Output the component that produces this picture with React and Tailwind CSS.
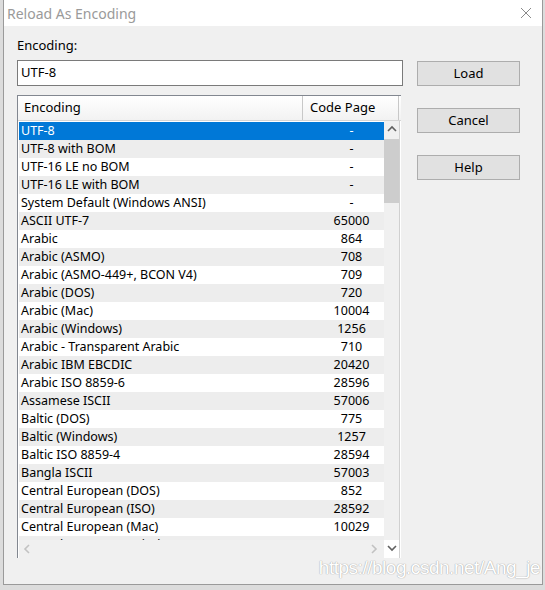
import React from 'react';

const rows = [
  ['UTF-8', '-'],
  ['UTF-8 with BOM', '-'],
  ['UTF-16 LE no BOM', '-'],
  ['UTF-16 LE with BOM', '-'],
  ['System Default (Windows ANSI)', '-'],
  ['ASCII UTF-7', '65000'],
  ['Arabic', '864'],
  ['Arabic (ASMO)', '708'],
  ['Arabic (ASMO-449+, BCON V4)', '709'],
  ['Arabic (DOS)', '720'],
  ['Arabic (Mac)', '10004'],
  ['Arabic (Windows)', '1256'],
  ['Arabic - Transparent Arabic', '710'],
  ['Arabic IBM EBCDIC', '20420'],
  ['Arabic ISO 8859-6', '28596'],
  ['Assamese ISCII', '57006'],
  ['Baltic (DOS)', '775'],
  ['Baltic (Windows)', '1257'],
  ['Baltic ISO 8859-4', '28594'],
  ['Bangla ISCII', '57003'],
  ['Central European (DOS)', '852'],
  ['Central European (ISO)', '28592'],
  ['Central European (Mac)', '10029'],
  ['Central European (Windows)', '1250'],
];

const Chevron = ({ dir, className }) => {
  const d = {
    up: 'M1 6 L5 2 L9 6',
    down: 'M1 2 L5 6 L9 2',
    left: 'M6 1 L2 5 L6 9',
    right: 'M2 1 L6 5 L2 9',
  }[dir];
  return (
    <svg width="10" height="10" viewBox="0 0 10 10" className={className}>
      <path d={d} fill="none" stroke="currentColor" strokeWidth="1.6" />
    </svg>
  );
};

const Button = ({ children }) => (
  <button className="w-[103px] h-[25px] bg-[#e1e1e1] border border-[#adadad] text-[13px] text-black">
    {children}
  </button>
);

export default function App() {
  return (
    <div
      className="w-[545px] h-[590px] bg-[#dcdcdc] overflow-hidden"
      style={{ fontFamily: '"Noto Sans", "Noto Sans CJK SC", sans-serif' }}
    >
      <div className="ml-[3px] w-[540px] h-[585px] bg-[#f0f0f0] border border-[#9a9a9a] border-t-0 relative flex flex-col">
        {/* title bar */}
        <div className="h-[26px] bg-white flex items-center justify-between pl-[3px] pr-[10px] shrink-0">
          <span className="text-[14px] text-[#9a9a9a]">Reload As Encoding</span>
          <svg width="12" height="12" viewBox="0 0 12 12">
            <path d="M1 1 L11 11 M11 1 L1 11" stroke="#8a8a8a" strokeWidth="1" />
          </svg>
        </div>

        <div className="flex pl-[13px] pt-[10px]">
          <div className="flex flex-col">
            <span className="text-[13px] text-black leading-[18px]">Encoding:</span>
            <div className="mt-[6px] w-[386px] h-[26px] bg-white border border-[#7a7a7a] flex items-center pl-[3px] text-[13px] text-black">
              UTF-8
            </div>

            {/* list */}
            <div className="mt-[9px] w-[384px] h-[463px] border-l border-t border-[#828790] bg-white flex flex-col">
              <div className="h-[25px] flex border-b border-[#d5d5d5] bg-gradient-to-b from-white to-[#f2f2f2] shrink-0">
                <div className="w-[285px] border-r border-[#c8c8c8] pl-[6px] flex items-center text-[13px] text-black">
                  Encoding
                </div>
                <div className="w-[96px] border-r border-[#c8c8c8] pl-[7px] flex items-center text-[13px] text-black">
                  Code Page
                </div>
              </div>
              <div className="flex flex-1 min-h-0">
                <div className="flex flex-col w-[366px] pl-px">
                  <div className="flex-1 min-h-0 overflow-hidden pt-px">
                    {rows.map(([name, cp], i) => (
                      <div
                        key={name}
                        className={`flex w-[381px] h-[18px] items-center text-[12.5px] ${
                          i === 0 ? 'bg-[#0078d7] text-white' : i % 2 === 1 ? 'bg-[#ededed] text-black' : 'bg-white text-black'
                        }`}
                      >
                        <div className="w-[284px] pl-[2px] whitespace-nowrap">{name}</div>
                        <div className="w-[97px] text-center">{cp}</div>
                      </div>
                    ))}
                  </div>
                  <div className="h-[18px] bg-[#f0f0f0] flex items-center justify-between px-[4px] text-[#c2c2c2] shrink-0">
                    <Chevron dir="left" />
                    <Chevron dir="right" />
                  </div>
                </div>
                <div className="w-[16px] flex flex-col bg-[#f0f0f0] border-r border-[#d0d0d0]">
                  <div className="h-[18px] flex items-center justify-center text-[#606060]">
                    <Chevron dir="up" />
                  </div>
                  <div className="h-[64px] bg-[#cdcdcd]" />
                  <div className="flex-1" />
                  <div className="h-[18px] bg-white flex items-center justify-center text-[#606060]">
                    <Chevron dir="down" />
                  </div>
                </div>
              </div>
            </div>
          </div>

          <div className="flex flex-col gap-[22px] ml-[14px] mt-[25px]">
            <Button>Load</Button>
            <Button>Cancel</Button>
            <Button>Help</Button>
          </div>
        </div>

        <div
          className="absolute right-[2px] bottom-[2px] text-[19px] text-white tracking-tight"
          style={{ fontFamily: '"Liberation Sans", sans-serif', textShadow: '0 0 1px #a8a8a8, 0 0 1px #a8a8a8' }}
        >
          https://blog.csdn.net/Ang_je
        </div>
      </div>
    </div>
  );
}
